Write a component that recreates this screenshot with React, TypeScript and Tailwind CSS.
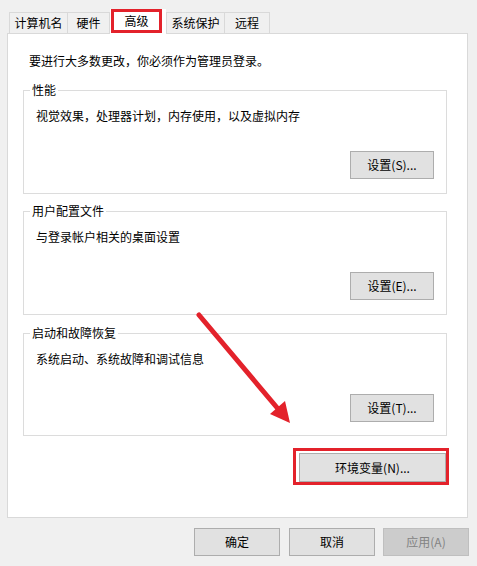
import React from "react";

const FONT = "font-['Segoe_UI','Noto_Sans_CJK_SC','Noto_Sans',sans-serif]";

function WinButton({ label, className = "", disabled = false }: { label: string; className?: string; disabled?: boolean }) {
  return (
    <div
      className={`flex items-center justify-center border text-[12px] leading-[16px] ${
        disabled ? "bg-[#cccccc] border-[#bfbfbf] text-[#838383]" : "bg-[#e1e1e1] border-[#adadad] text-black"
      } ${className}`}
    >
      {label}
    </div>
  );
}

function GroupBox({ title, desc, button, h }: { title: string; desc: string; button: string; h: string }) {
  return (
    <div className={`ml-[15px] w-[424px] ${h} border border-[#dcdcdc] flex flex-col`}>
      <span className="-mt-[9px] ml-[6px] px-[2px] w-fit bg-white leading-[16px]">{title}</span>
      <p className="mt-[10px] ml-[12px] leading-[16px]">{desc}</p>
      <WinButton label={button} className="self-end mr-[12px] mt-[27px] w-[84px] h-[28px]" />
    </div>
  );
}

export default function App() {
  const tabs = ["计算机名", "硬件", "高级", "系统保护", "远程"];
  const widths = ["w-[59px]", "w-[42px]", "w-[56px]", "w-[58px]", "w-[46px]"];

  return (
    <div className={`relative w-[477px] h-[566px] overflow-hidden bg-[#f0f0f0] text-[12px] text-black ${FONT}`}>
      {/* tab strip */}
      <div className="flex items-end pl-[9px] pt-[9px] h-[33px]">
        {tabs.map((t, i) =>
          i === 2 ? (
            <div key={t} className={`${widths[i]} h-[25px] -mb-px relative z-10 bg-white`}>
              <div className="ml-[1px] w-[51px] h-[24px] flex items-center justify-center ring-[3px] ring-inset ring-[#e3222b]">
                {t}
              </div>
            </div>
          ) : (
            <div
              key={t}
              className={`${widths[i]} h-[21px] flex items-center justify-center border border-b-0 border-[#d9d9d9] ${
                i === 1 ? "border-l-0" : ""
              } ${i === 3 ? "border-r-0" : ""}`}
            >
              {t}
            </div>
          )
        )}
      </div>

      {/* tab page */}
      <div className="ml-[7px] w-[461px] h-[485px] border border-[#d9d9d9] bg-white flex flex-col">
        <p className="pl-[21px] pt-[19px] leading-[16px]">要进行大多数更改，你必须作为管理员登录。</p>

        <div className="mt-[21px] flex flex-col">
          <GroupBox title="性能" desc="视觉效果，处理器计划，内存使用，以及虚拟内存" button="设置(S)..." h="h-[104px]" />
          <div className="mt-[17px]">
            <GroupBox title="用户配置文件" desc="与登录帐户相关的桌面设置" button="设置(E)..." h="h-[104px]" />
          </div>
          <div className="mt-[18px]">
            <GroupBox title="启动和故障恢复" desc="系统启动、系统故障和调试信息" button="设置(T)..." h="h-[103px]" />
          </div>
        </div>

        <div className="self-end mr-[18px] mt-[12px] border-[3px] border-[#e3222b] pl-[3px] pt-[2px]">
          <WinButton label="环境变量(N)..." className="w-[147px] h-[29px]" />
        </div>
      </div>

      {/* dialog buttons */}
      <div className="flex justify-end pr-[8px] mt-[10px]">
        <WinButton label="确定" className="w-[86px] h-[28px]" />
        <WinButton label="取消" className="ml-[9px] w-[86px] h-[28px]" />
        <WinButton label="应用(A)" disabled className="ml-[8px] w-[86px] h-[28px]" />
      </div>

      {/* annotation arrow */}
      <svg className="absolute inset-0 pointer-events-none" width="477" height="566">
        <line x1="199" y1="315" x2="279" y2="410" stroke="#e3222b" strokeWidth="5" strokeLinecap="round" />
        <polygon points="290,423 270,414 285,401" fill="#e3222b" />
      </svg>
    </div>
  );
}
